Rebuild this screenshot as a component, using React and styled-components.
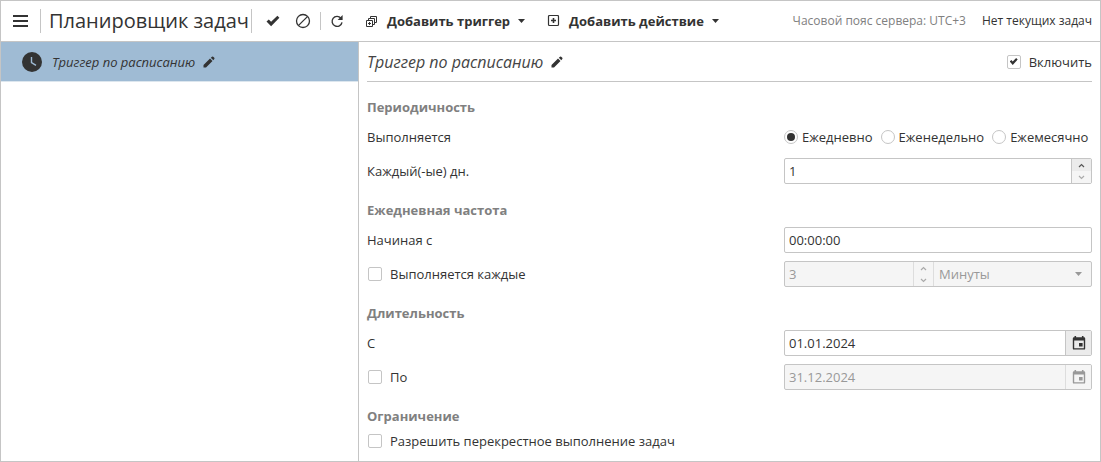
import React, { useState } from 'react'
import styled, { createGlobalStyle } from 'styled-components'

const GlobalStyle = createGlobalStyle`
    * {
        box-sizing: border-box;
    }

    body {
        margin: 0;
        background: #fff;
        color: #333;
        font: 13px/20px 'Open Sans', 'Noto Sans', sans-serif;
    }

    button, input, select {
        font: inherit;
        color: inherit;
        margin: 0;
    }
`

const Page = styled.div`
    display: flex;
    flex-direction: column;
    min-height: 100vh;
    border: 1px solid #c5c5c5;
`

const Toolbar = styled.header`
    display: flex;
    align-items: center;
    height: 41px;
    padding: 0 8px 0 10px;
    border-bottom: 1px solid #c5c5c5;
    white-space: nowrap;
`

const Actions = styled.div`
    display: flex;
    align-items: center;
    padding: 0 2px 0 6px;
`

const Divider = styled.span`
    width: 1px;
    height: ${p => (p.$short ? 18 : 24)}px;
    background: #c5c5c5;
`

const Title = styled.h1`
    margin: 0;
    padding: 0 2px 0 8px;
    font-size: 20px;
    line-height: 28px;
    font-weight: 400;
`

const IconButton = styled.button`
    display: flex;
    align-items: center;
    justify-content: center;
    width: ${p => p.$width || 30}px;
    height: 30px;
    padding: 0;
    border: none;
    background: transparent;
`

const MenuToggle = styled(IconButton)`
    margin-right: 9px;
`

const MenuButton = styled.button`
    display: flex;
    align-items: center;
    gap: 8px;
    height: 30px;
    padding: 0 11px;
    border: none;
    background: transparent;
    font-weight: 700;
`

const Status = styled.div`
    display: flex;
    gap: 16px;
    margin-left: auto;
    font-size: 12px;
`

const Zone = styled.span`
    color: #808080;
`

const Content = styled.div`
    display: flex;
    flex: 1;
`

const Sidebar = styled.nav`
    width: 358px;
    flex: none;
    border-right: 1px solid #c5c5c5;
`

const TriggerItem = styled.div`
    display: flex;
    align-items: center;
    gap: 8px;
    height: 40px;
    padding-left: 21px;
    background: #9fbbd4;
    border-bottom: 1px solid #dce6ee;
    font-style: italic;
`

const Pencil = styled.button`
    display: flex;
    padding: 0;
    border: none;
    background: transparent;
`

const Panel = styled.main`
    flex: 1;
    min-width: 0;
    padding: 0 8px;
`

const PanelHead = styled.div`
    display: flex;
    align-items: center;
    justify-content: space-between;
    height: 40px;
    border-bottom: 1px solid #c5c5c5;
`

const PanelTitle = styled.h2`
    display: flex;
    align-items: center;
    gap: 8px;
    margin: 0;
    font-size: 16px;
    font-weight: 400;
    font-style: italic;
    color: #444;
`

const Form = styled.form`
    display: flex;
    flex-direction: column;
    gap: 17px;
    padding-top: 16px;
`

const Section = styled.section`
    display: flex;
    flex-direction: column;
    gap: 8px;
`

const Heading = styled.h3`
    margin: 0;
    font-size: 13px;
    line-height: 18px;
    font-weight: 700;
    color: #808080;
`

const Row = styled.div`
    display: flex;
    align-items: center;
    justify-content: space-between;
    height: ${p => (p.$low ? 16 : 26)}px;
`

const CheckLabel = styled.label`
    display: flex;
    align-items: center;
    gap: 8px;
    padding-left: 1px;
`

const Box = styled.input`
    appearance: none;
    display: grid;
    place-items: center;
    width: 14px;
    height: 14px;
    border: 1px solid #c5c5c5;
    border-radius: 2px;
    background: #fff;

    &:checked::before {
        content: '';
        width: 8px;
        height: 7px;
        background: #333;
        clip-path: polygon(0 50%, 20% 28%, 38% 50%, 80% 0, 100% 20%, 38% 100%);
    }
`

const Radios = styled.div`
    display: flex;
    gap: 8px;
    width: 308px;
`

const RadioLabel = styled.label`
    display: flex;
    align-items: center;
    gap: 4px;
`

const Radio = styled.input`
    appearance: none;
    display: grid;
    place-items: center;
    width: 14px;
    height: 14px;
    border: 1px solid #c5c5c5;
    border-radius: 50%;

    &:checked::before {
        content: '';
        width: 8px;
        height: 8px;
        border-radius: 50%;
        background: #333;
    }
`

const Field = styled.div`
    display: flex;
    width: 308px;
    height: 26px;
    border: 1px solid #c5c5c5;
    border-radius: 2px;
    overflow: hidden;
    background: ${p => (p.$off ? '#f5f5f5' : '#fff')};
    color: ${p => (p.$off ? '#999' : '#333')};
`

const TextInput = styled.input`
    flex: 1;
    min-width: 0;
    padding: 0 4px;
    border: none;
    outline: none;
    background: transparent;
`

const Spin = styled.div`
    display: flex;
    flex-direction: column;
    width: 20px;
    border-left: 1px solid ${p => (p.$off ? '#ddd' : '#c5c5c5')};
`

const SpinButton = styled.button`
    display: flex;
    flex: 1;
    align-items: center;
    justify-content: center;
    padding: 0;
    border: none;
    background: ${p => (p.$hot ? '#ebebeb' : '#f5f5f5')};
    color: ${p => (p.$hot ? '#555' : '#aaa')};
`

const DateButton = styled.button`
    display: flex;
    align-items: center;
    justify-content: center;
    width: 26px;
    padding: 0;
    border: none;
    border-left: 1px solid ${p => (p.disabled ? '#ddd' : '#c5c5c5')};
    background: ${p => (p.disabled ? '#f5f5f5' : '#ebebeb')};
    color: ${p => (p.disabled ? '#999' : '#333')};
`

const Unit = styled.div`
    display: flex;
    align-items: center;
    width: 158px;
    padding-right: 9px;
    border-left: 1px solid #ddd;
`

const Select = styled.select`
    appearance: none;
    flex: 1;
    padding: 0 5px;
    border: none;
    background: transparent;
    opacity: 1;
`

const MenuIcon = () => (
    <svg width='16' height='12' viewBox='0 0 16 12' fill='#333'>
        <path d='M0 0h15v2H0zM0 5h15v2H0zM0 10h15v2H0z' />
    </svg>
)

const CheckIcon = () => (
    <svg width='14' height='12' viewBox='0 0 14 12' fill='#333'>
        <path d='M0.5 6.6 2.8 4.4 5.1 6.7 11.4 0.8 13.4 2.7 5.1 11.2z' />
    </svg>
)

const BanIcon = () => (
    <svg width='16' height='16' viewBox='0 0 16 16' fill='none' stroke='#333' strokeWidth='1.3'>
        <circle cx='8' cy='8' r='6.5' />
        <path d='M12.4 3.6 3.6 12.4' />
    </svg>
)

const RefreshIcon = () => (
    <svg width='14' height='14' viewBox='0 0 14 14'>
        <path d='M10.9 4.1A5 5 0 1 0 12 8.3' fill='none' stroke='#333' strokeWidth='1.4' />
        <path d='M12.6 1v5H7.6z' fill='#333' />
    </svg>
)

const CopiesIcon = () => (
    <svg width='14' height='13' viewBox='0 0 14 13' fill='none' stroke='#333'>
        <path d='M1.5 5.5h6v6h-6zM3.5 5.5v-2h6v6h-2M5.5 3.5v-2h6v6h-2' />
        <path d='M4.5 7v3M3 8.5h3' />
    </svg>
)

const PlusBoxIcon = () => (
    <svg width='14' height='12' viewBox='0 0 14 12' fill='none' stroke='#333'>
        <rect x='1.5' y='0.5' width='10' height='10' rx='1' strokeWidth='1.2' />
        <path d='M6.5 3v5M4 5.5h5' strokeWidth='1.6' />
    </svg>
)

const Caret = () => (
    <svg width='7' height='4' viewBox='0 0 7 4' fill='currentColor'>
        <path d='M0 0h7L3.5 4z' />
    </svg>
)

const ClockIcon = () => (
    <svg width='22' height='20' viewBox='0 0 22 20'>
        <circle cx='10' cy='10' r='10' fill='#333' />
        <path d='M9.5 5v5.5l4.5 2.8' fill='none' stroke='#9fbbd4' strokeWidth='1.4' />
    </svg>
)

const PencilIcon = () => (
    <svg width='12' height='12' viewBox='0 0 12 12' fill='#333'>
        <path d='M0.5 11.5V8.9L7 2.6 9.5 5.1 3 11.5zM7.8 1.8 9 0.7Q9.6 0.2 10.2 0.7L11.3 1.8Q11.8 2.4 11.3 3L10.3 4.2z' />
    </svg>
)

const Chevron = ({ down }) => (
    <svg width='7' height='5' viewBox='0 0 7 5' fill='none' stroke='currentColor' strokeWidth='1.2'>
        <path d={down ? 'M1 1l2.5 2.5L6 1' : 'M1 4l2.5-2.5L6 4'} />
    </svg>
)

const CalendarIcon = () => (
    <svg width='14' height='14' viewBox='0 0 14 14' fill='currentColor'>
        <path fillRule='evenodd' d='M2.5 0h1.6v1.2h5.8V0h1.6v1.2h.5q1.2 0 1.2 1.2v10q0 1.2-1.2 1.2H2Q.8 13.6.8 12.4v-10Q.8 1.2 2 1.2h.5zM2.2 4.6v7.6h9.6V4.6zM7 7h3.6v3.6H7z' />
    </svg>
)

const Spinner = ({ off, onStep }) => (
    <Spin $off={off}>
        <SpinButton type='button' $hot={!off} disabled={off} aria-label='Увеличить' onClick={() => onStep(1)}>
            <Chevron />
        </SpinButton>
        <SpinButton type='button' disabled={off} aria-label='Уменьшить' onClick={() => onStep(-1)}>
            <Chevron down />
        </SpinButton>
    </Spin>
)

const periods = ['Ежедневно', 'Еженедельно', 'Ежемесячно']

const App = () => {
    const [period, setPeriod] = useState(periods[0])
    const [days, setDays] = useState(1)
    const [count, setCount] = useState(3)
    const [repeat, setRepeat] = useState(false)
    const [limited, setLimited] = useState(false)

    return (
        <Page>
            <GlobalStyle />
            <Toolbar>
                <MenuToggle $width={20} aria-label='Меню'><MenuIcon /></MenuToggle>
                <Divider />
                <Title>Планировщик задач</Title>
                <Divider />
                <Actions>
                    <IconButton aria-label='Применить'><CheckIcon /></IconButton>
                    <IconButton aria-label='Отменить'><BanIcon /></IconButton>
                </Actions>
                <Divider $short />
                <IconButton $width={33} aria-label='Обновить'><RefreshIcon /></IconButton>
                <MenuButton><CopiesIcon />Добавить триггер<Caret /></MenuButton>
                <MenuButton><PlusBoxIcon />Добавить действие<Caret /></MenuButton>
                <Status>
                    <Zone>Часовой пояс сервера: UTC+3</Zone>
                    <span>Нет текущих задач</span>
                </Status>
            </Toolbar>
            <Content>
                <Sidebar>
                    <TriggerItem>
                        <ClockIcon />
                        Триггер по расписанию
                        <Pencil aria-label='Переименовать'><PencilIcon /></Pencil>
                    </TriggerItem>
                </Sidebar>
                <Panel>
                    <PanelHead>
                        <PanelTitle>
                            Триггер по расписанию
                            <Pencil aria-label='Переименовать'><PencilIcon /></Pencil>
                        </PanelTitle>
                        <CheckLabel><Box type='checkbox' defaultChecked />Включить</CheckLabel>
                    </PanelHead>

                    <Form>
                        <Section>
                            <Heading>Периодичность</Heading>
                            <Row>
                                <span id='period'>Выполняется</span>
                                <Radios role='radiogroup' aria-labelledby='period'>
                                    {periods.map(name => (
                                        <RadioLabel key={name}>
                                            <Radio
                                                type='radio'
                                                name='period'
                                                checked={period === name}
                                                onChange={() => setPeriod(name)}
                                            />
                                            {name}
                                        </RadioLabel>
                                    ))}
                                </Radios>
                            </Row>
                            <Row>
                                <label htmlFor='days'>Каждый(-ые) дн.</label>
                                <Field>
                                    <TextInput id='days' value={days} onChange={e => setDays(Number(e.target.value) || 0)} />
                                    <Spinner onStep={n => setDays(days + n)} />
                                </Field>
                            </Row>
                        </Section>

                        <Section>
                            <Heading>Ежедневная частота</Heading>
                            <Row>
                                <label htmlFor='start'>Начиная с</label>
                                <Field><TextInput id='start' defaultValue='00:00:00' /></Field>
                            </Row>
                            <Row>
                                <CheckLabel>
                                    <Box type='checkbox' checked={repeat} onChange={() => setRepeat(!repeat)} />
                                    Выполняется каждые
                                </CheckLabel>
                                <Field $off={!repeat}>
                                    <TextInput
                                        aria-label='Интервал'
                                        value={count}
                                        disabled={!repeat}
                                        onChange={e => setCount(Number(e.target.value) || 0)}
                                    />
                                    <Spinner off={!repeat} onStep={n => setCount(count + n)} />
                                    <Unit>
                                        <Select aria-label='Единица' disabled={!repeat}>
                                            <option>Минуты</option>
                                            <option>Часы</option>
                                        </Select>
                                        <Caret />
                                    </Unit>
                                </Field>
                            </Row>
                        </Section>

                        <Section>
                            <Heading>Длительность</Heading>
                            <Row>
                                <label htmlFor='from'>С</label>
                                <Field>
                                    <TextInput id='from' defaultValue='01.01.2024' />
                                    <DateButton type='button' aria-label='Календарь'><CalendarIcon /></DateButton>
                                </Field>
                            </Row>
                            <Row>
                                <CheckLabel>
                                    <Box type='checkbox' checked={limited} onChange={() => setLimited(!limited)} />
                                    По
                                </CheckLabel>
                                <Field $off={!limited}>
                                    <TextInput aria-label='По' defaultValue='31.12.2024' disabled={!limited} />
                                    <DateButton type='button' aria-label='Календарь' disabled={!limited}>
                                        <CalendarIcon />
                                    </DateButton>
                                </Field>
                            </Row>
                        </Section>

                        <Section>
                            <Heading>Ограничение</Heading>
                            <Row $low>
                                <CheckLabel><Box type='checkbox' />Разрешить перекрестное выполнение задач</CheckLabel>
                            </Row>
                        </Section>
                    </Form>
                </Panel>
            </Content>
        </Page>
    )
}

export default App
